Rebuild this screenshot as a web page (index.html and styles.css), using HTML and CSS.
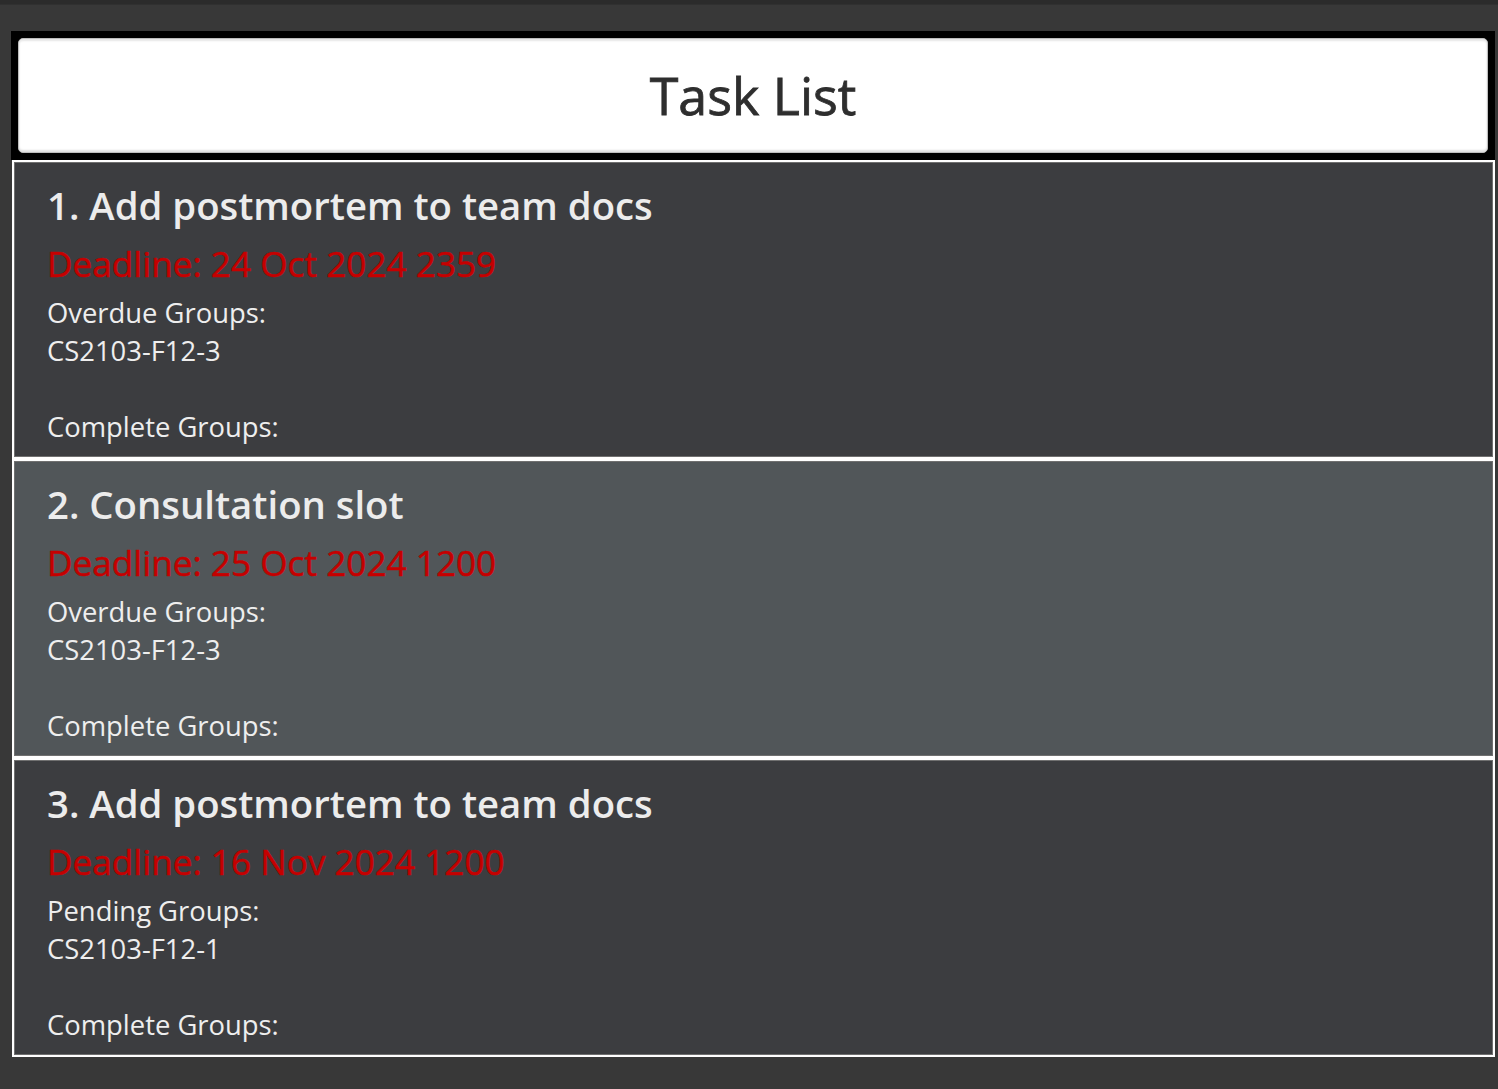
FILE: index.html
```html
<!DOCTYPE html>
<html>
<head>
<meta charset="utf-8">
<link rel="stylesheet" href="styles.css">
</head>
<body>
<div class="topstrip"></div>
<div class="app">
  <div class="header-panel">
    <div class="header-box"><h1 class="header-title">Task List</h1></div>
  </div>
  <div class="task-list">
    <div class="card">
      <div class="card-title">1. Add postmortem to team docs</div>
      <div class="deadline">Deadline: 24 Oct 2024 2359</div>
      <div class="groups">Overdue Groups:<br>CS2103-F12-3<br><br>Complete Groups:</div>
    </div>
    <div class="card card-alt">
      <div class="card-title">2. Consultation slot</div>
      <div class="deadline">Deadline: 25 Oct 2024 1200</div>
      <div class="groups">Overdue Groups:<br>CS2103-F12-3<br><br>Complete Groups:</div>
    </div>
    <div class="card">
      <div class="card-title">3. Add postmortem to team docs</div>
      <div class="deadline">Deadline: 16 Nov 2024 1200</div>
      <div class="groups">Pending Groups:<br>CS2103-F12-1<br><br>Complete Groups:</div>
    </div>
  </div>
</div>
</body>
</html>
```
FILE: styles.css
```css
html, body {
  margin: 0;
  padding: 0;
  background: #383838;
  font-family: "Open Sans", "Noto Sans", sans-serif;
}
.topstrip {
  height: 4px;
  background: #2b2b2b;
  border-bottom: 1px solid #303030;
}
.app {
  padding: 26px 3px 0 11px;
}
.header-panel {
  background: #000;
  padding: 7px;
  height: 115px;
}
.header-box {
  box-sizing: border-box;
  height: 115px;
  background: #fff;
  border-radius: 5px;
  border: 1px solid #bdbdbd;
  box-shadow: inset 0 2px 2px #e6e6e6, inset 0 -2px 2px #e0e0e0;
  display: flex;
  align-items: center;
  justify-content: center;
}
.header-title {
  margin: 0 0 2px 0;
  font-weight: 400;
  font-size: 52px;
  color: #2e2e2e;
  -webkit-text-stroke: 0.8px #2e2e2e;
}
.task-list {
  margin-left: 1px;
}
.card {
  box-sizing: border-box;
  height: 299px;
  border: 2px solid #fff;
  box-shadow: inset 0 0 0 1px #707070;
  background: #3c3d40;
  padding: 16px 32px 0 33px;
  color: #ececec;
}
.card-alt {
  background: #515659;
}
.card-title {
  font-size: 38.3px;
  font-weight: 600;
  line-height: 54px;
  color: #ececec;
}
.deadline {
  font-size: 35.2px;
  font-weight: 400;
  color: #c50000;
  line-height: 62px;
  -webkit-text-stroke: 0.5px #c50000;
}
.groups {
  font-size: 27.4px;
  line-height: 38px;
  color: #eeeeee;
}
```
